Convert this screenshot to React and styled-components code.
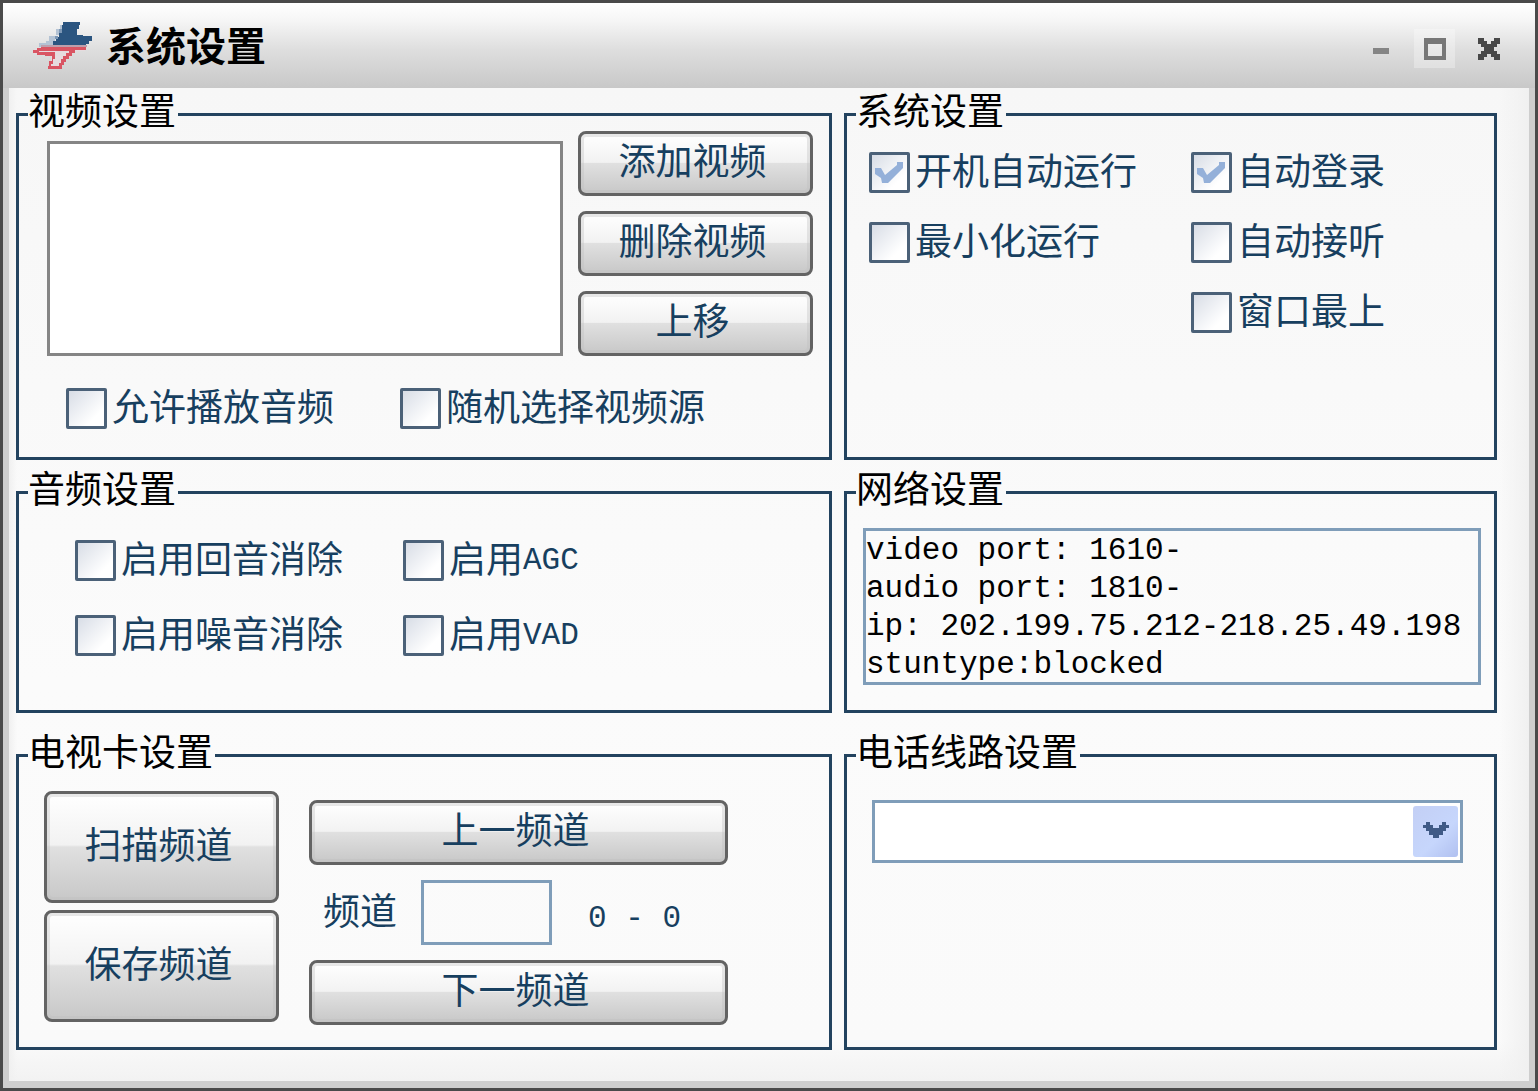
import React, { useState } from "react";
import styled, { createGlobalStyle, css } from "styled-components";

function CheckItem({ checked, children }) {
	const [on, setOn] = useState(Boolean(checked));

	return (
		<CheckLabel>
			<CheckBox type="checkbox" checked={on} onChange={() => setOn(!on)} />
			<CheckText>{children}</CheckText>
		</CheckLabel>
	);
}

function Logo() {
	return (
		<svg width="62" height="50" viewBox="0 0 62 50" aria-hidden="true">
			<path
				d="M29 4h4v4h-4zM25 8h6v6h-6zM18 15h6v5h-6zM15 20h8v5h-8zM8 22h7v4H8z"
				fill="#b4c3d4"
			/>
			<path
				d="M32 1H49V4H48V8H46V14H52V15H61V20H58V23H55V24H22V20H25V16H28V12H30V8H31V4H32Z"
				fill="#2b5580"
			/>
			<path d="M28 8h3v4h-3zM24 15h3v3h-3z" fill="#7d98b6" />
			<path d="M10 24h46v2H10z" fill="#bd9fac" />
			<path
				d="M3 28H54V30H44V31H40V34H37V37H34V40H32V43H30V47H18V42H20V34H15V33H3Z"
				fill="#e6dcdf"
			/>
			<path
				d="M10 26H55V29H44V32H41V35H38V38H35V41H33V44H31V48H17V45H18V40H21V35H14V34H6V32H2V29H6V27H10ZM8 30V31H24V38H22V43H20V45H28V42H30V38H32V35H35V32H38V30Z"
				fill="#d95563"
				fillRule="evenodd"
			/>
		</svg>
	);
}

function App() {
	const [channel, setChannel] = useState("");

	return (
		<>
			<GlobalStyle />
			<Window>
				<TitleBar>
					<Logo />
					<Title>系统设置</Title>
					<WindowButton type="button" aria-label="最小化">
						<svg width="16" height="22" viewBox="0 0 16 22">
							<path d="M0 10h16v6H0z" fill="#858585" />
						</svg>
					</WindowButton>
					<WindowButton type="button" aria-label="最大化" $raised>
						<svg width="22" height="22" viewBox="0 0 22 22">
							<path d="M0 0h22v22H0zM4 6v12h14V6z" fill="#777" fillRule="evenodd" />
						</svg>
					</WindowButton>
					<WindowButton type="button" aria-label="关闭">
						<svg width="22" height="22" viewBox="0 0 22 22">
							<path
								d="M0 0h6v3h3v3h4V3h3V0h6v6h-3v3h-3v4h3v3h3v6h-6v-3h-3v-3H9v3H6v3H0v-6h3v-3h3V9H3V6H0z"
								fill="#484848"
							/>
						</svg>
					</WindowButton>
				</TitleBar>
				<Content>
					<Row>
						<Panel>
							<PanelTitle>视频设置</PanelTitle>
							<VideoSources>
								<SourceList size="2" aria-label="视频源" />
								<ButtonColumn $gap={15}>
									<Button type="button">添加视频</Button>
									<Button type="button">删除视频</Button>
									<Button type="button">上移</Button>
								</ButtonColumn>
							</VideoSources>
							<CheckGrid $padding="32px 0 28px 47px" $first={334}>
								<CheckItem>允许播放音频</CheckItem>
								<CheckItem>随机选择视频源</CheckItem>
							</CheckGrid>
						</Panel>
						<Panel>
							<PanelTitle>系统设置</PanelTitle>
							<CheckGrid $padding="24px 0 0 22px" $first={322} $gap={29}>
								<CheckItem checked>开机自动运行</CheckItem>
								<CheckItem checked>自动登录</CheckItem>
								<CheckItem>最小化运行</CheckItem>
								<CheckItem>自动接听</CheckItem>
								<span />
								<CheckItem>窗口最上</CheckItem>
							</CheckGrid>
						</Panel>
					</Row>
					<Row $top={18}>
						<Panel>
							<PanelTitle>音频设置</PanelTitle>
							<CheckGrid $padding="34px 0 54px 56px" $first={328} $gap={34}>
								<CheckItem>启用回音消除</CheckItem>
								<CheckItem>
									启用<Latin>AGC</Latin>
								</CheckItem>
								<CheckItem>启用噪音消除</CheckItem>
								<CheckItem>
									启用<Latin>VAD</Latin>
								</CheckItem>
							</CheckGrid>
						</Panel>
						<Panel>
							<PanelTitle>网络设置</PanelTitle>
							<NetworkBody>
								<NetworkInfo
									readOnly
									rows="4"
									aria-label="网络信息"
									value={
										"video port: 1610-\naudio port: 1810-\nip: 202.199.75.212-218.25.49.198\nstuntype:blocked"
									}
								/>
							</NetworkBody>
						</Panel>
					</Row>
					<Row $top={28}>
						<Panel>
							<PanelTitle>电视卡设置</PanelTitle>
							<TvBody>
								<ButtonColumn $gap={7}>
									<Button type="button" $tall>
										扫描频道
									</Button>
									<Button type="button" $tall>
										保存频道
									</Button>
								</ButtonColumn>
								<ChannelColumn>
									<Button type="button">上一频道</Button>
									<ChannelRow>
										<label htmlFor="channel">频道</label>
										<ChannelInput
											id="channel"
											value={channel}
											onChange={(e) => setChannel(e.target.value)}
										/>
										<ChannelRange>0 - 0</ChannelRange>
									</ChannelRow>
									<Button type="button">下一频道</Button>
								</ChannelColumn>
							</TvBody>
						</Panel>
						<Panel>
							<PanelTitle>电话线路设置</PanelTitle>
							<LineBody>
								<LineSelect aria-label="电话线路" />
								<SelectArrow>
									<svg width="26" height="16" viewBox="0 0 26 16">
										<path
											d="M3 0h4v3h3v3h6V3h3V0h4v3h3v3h-3v3h-3v4h-4v3h-6v-3H6V9H3V6H0V3h3z"
											fill="#3f5a86"
										/>
									</svg>
								</SelectArrow>
							</LineBody>
						</Panel>
					</Row>
				</Content>
			</Window>
		</>
	);
}

const GlobalStyle = createGlobalStyle`
	* {
		box-sizing: border-box;
	}

	body {
		margin: 0;
		color: #173f5f;
		font-family: "Liberation Sans", "Noto Sans CJK SC", sans-serif;
		font-size: 37px;
		line-height: 41px;
	}

	button, input, select, textarea {
		margin: 0;
		font: inherit;
		color: inherit;
	}
`;

const Window = styled.main`
	display: flex;
	flex-direction: column;
	min-height: 100vh;
	border: 3px solid #4a4a4a;
	background: #cecece;
`;

const TitleBar = styled.header`
	display: flex;
	align-items: center;
	height: 85px;
	padding: 0 26px 0 28px;
	background: linear-gradient(#ffffff, #f6f6f6 20%, #dedede 55%, #c8c8c8);
`;

const Title = styled.h1`
	flex: 1;
	margin: 0 0 0 13px;
	padding-top: 4px;
	color: #000;
	font-size: 40px;
	font-weight: 700;
`;

const WindowButton = styled.button`
	display: flex;
	align-items: center;
	justify-content: center;
	width: 41px;
	height: 39px;
	margin: 6px 0 0 13px;
	padding: 0;
	border: 0;
	background: ${(props) => (props.$raised ? "rgba(255, 255, 255, 0.3)" : "transparent")};
`;

const Content = styled.div`
	flex: 1;
	margin: 0 6px 7px;
	padding: 12px 32px 31px 7px;
	background: linear-gradient(90deg, #f0f0f0, transparent 8px, transparent calc(100% - 30px), #f0f0f0),
		linear-gradient(#f7f7f7, #fbfbfb 60%, #fafafa 96%, #f2f2f2);
`;

const Row = styled.div`
	display: grid;
	grid-template-columns: 816fr 653fr;
	gap: 12px;
	margin-top: ${(props) => props.$top || 0}px;
`;

const Panel = styled.fieldset`
	min-width: 0;
	margin: 0;
	padding: 0;
	border: 3px solid #23435f;
`;

const PanelTitle = styled.legend`
	margin-left: 9px;
	padding: 0 2px 2px 0;
	color: #000;
	line-height: 26px;
`;

const VideoSources = styled.div`
	display: flex;
	align-items: flex-end;
	gap: 15px;
	padding: 3px 16px 0 28px;
`;

const SourceList = styled.select`
	flex: 1;
	min-width: 0;
	height: 215px;
	border: 3px solid #858585;
	border-radius: 0;
	background: #fff;
	appearance: none;
`;

const ButtonColumn = styled.div`
	display: flex;
	flex-direction: column;
	gap: ${(props) => props.$gap}px;
	width: 235px;
`;

const Button = styled.button`
	height: 65px;
	padding: 0 6px 2px 0;
	border: 3px solid #636363;
	border-radius: 8px;
	background: linear-gradient(#ffffff, #f2f2f2 48%, #e0e0e0 50%, #c8c8c8);
	box-shadow: inset 0 0 0 3px rgba(190, 190, 190, 0.35);
	${(props) =>
		props.$tall &&
		css`
			height: 112px;
		`}
`;

const CheckGrid = styled.div`
	display: grid;
	grid-template-columns: ${(props) => props.$first}px 1fr;
	row-gap: ${(props) => props.$gap || 0}px;
	padding: ${(props) => props.$padding};
`;

const CheckLabel = styled.label`
	display: flex;
	align-items: center;
	gap: 5px;
	height: 41px;
	white-space: nowrap;
`;

const CheckText = styled.span`
	display: flex;
	align-items: center;
`;

const CheckBox = styled.input`
	flex: none;
	width: 41px;
	height: 41px;
	border: 3px solid #4b6178;
	border-radius: 2px;
	background: linear-gradient(135deg, #d8dde6, #ffffff 75%);
	appearance: none;

	&:checked::before {
		content: "";
		display: block;
		width: 28px;
		height: 21px;
		margin: 7px 3px;
		background: #94b0d9;
		clip-path: polygon(
			0 6px,
			6px 6px,
			10px 13px,
			22px 3px,
			22px 0,
			28px 0,
			28px 6px,
			13px 21px,
			7px 21px,
			6px 16px,
			0 12px
		);
	}
`;

const Latin = styled.span`
	font-family: "Liberation Mono", monospace;
	font-size: 31px;
`;

const NetworkBody = styled.div`
	padding: 22px 13px 0 16px;
`;

const NetworkInfo = styled.textarea`
	display: block;
	width: 100%;
	height: 157px;
	padding: 1px 0 0;
	border: 3px solid #7f9db9;
	background: transparent;
	color: #000;
	font-family: "Liberation Mono", monospace;
	font-size: 31px;
	line-height: 38px;
	resize: none;
	overflow: hidden;
`;

const TvBody = styled.div`
	display: flex;
	gap: 30px;
	padding: 22px 101px 22px 25px;
`;

const ChannelColumn = styled.div`
	display: flex;
	flex: 1;
	flex-direction: column;
	gap: 15px;
	padding-top: 9px;
`;

const ChannelRow = styled.div`
	display: flex;
	align-items: center;
	gap: 24px;
	height: 65px;
	padding-left: 14px;
`;

const ChannelInput = styled.input`
	width: 131px;
	height: 65px;
	padding: 0 6px;
	border: 3px solid #7f9db9;
	background: transparent;
`;

const ChannelRange = styled(Latin)`
	margin-left: 12px;
	padding-top: 12px;
`;

const LineBody = styled.div`
	position: relative;
	padding: 31px 31px 0 25px;
`;

const LineSelect = styled.select`
	display: block;
	width: 100%;
	height: 63px;
	border: 3px solid #7f9db9;
	border-radius: 0;
	background: #fff;
	appearance: none;
`;

const SelectArrow = styled.span`
	position: absolute;
	top: 37px;
	right: 36px;
	display: flex;
	align-items: center;
	justify-content: center;
	width: 45px;
	height: 51px;
	padding-bottom: 4px;
	border-radius: 3px;
	background: linear-gradient(135deg, #c3cff5, #c6d6fc 60%, #b0c0f0);
	pointer-events: none;
`;

export default App;
